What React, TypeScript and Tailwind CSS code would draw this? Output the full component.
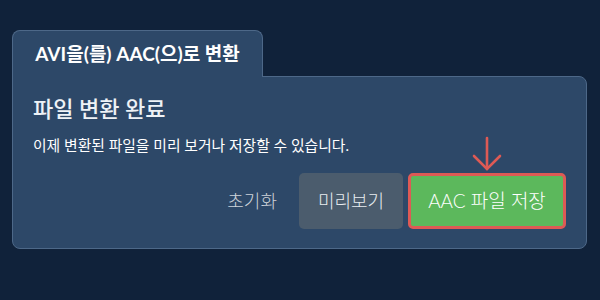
export default function App() {
  return (
    <div
      className="h-screen w-full bg-[#10223a] pl-[12px] pr-[13px] pt-[30px]"
      style={{ fontFamily: 'Lato, "Noto Sans CJK KR", sans-serif' }}
    >
      {/* Tab */}
      <div className="relative z-10 -mb-px flex h-[47px] w-[251px] items-center justify-center rounded-t-[8px] border border-b-0 border-[#4d6888] bg-[#2d4868]">
        <span className="text-[19px] font-bold text-white">AVI을(를) AAC(으)로 변환</span>
      </div>

      {/* Panel */}
      <div className="rounded-b-[8px] rounded-tr-[8px] border border-[#4d6888] bg-[#2d4868] px-[20px] pb-[19px] pt-[18px]">
        <h2 className="text-[22px] font-medium leading-[28px] text-[#eef2f6]">파일 변환 완료</h2>
        <p className="mt-[12px] text-[14.8px] leading-[20px] text-white">
          이제 변환된 파일을 미리 보거나 저장할 수 있습니다.
        </p>

        <div className="mt-[18px] flex items-center justify-end gap-[5px]">
          <button className="mr-[17px] text-[18px] font-light text-[#cdd3da]">초기화</button>
          <button className="h-[56px] w-[104px] rounded-[5px] bg-[#4b5c6d] text-[18px] font-light text-[#e8ecf0]">
            미리보기
          </button>
          <div className="relative">
            <svg
              className="absolute left-1/2 top-[-38px] -translate-x-1/2"
              width="30"
              height="36"
              viewBox="0 0 30 36"
              fill="none"
              stroke="#dd5a55"
              strokeWidth="2.6"
              strokeLinecap="round"
            >
              <path d="M15 3v31" />
              <path d="M2 21l13 13 13-13" />
            </svg>
            <button className="h-[56px] w-[158px] rounded-[5px] border-[3px] border-[#dd5a55] bg-[#5cb85c] text-[19px] font-light text-white">
              AAC 파일 저장
            </button>
          </div>
        </div>
      </div>
    </div>
  );
}
